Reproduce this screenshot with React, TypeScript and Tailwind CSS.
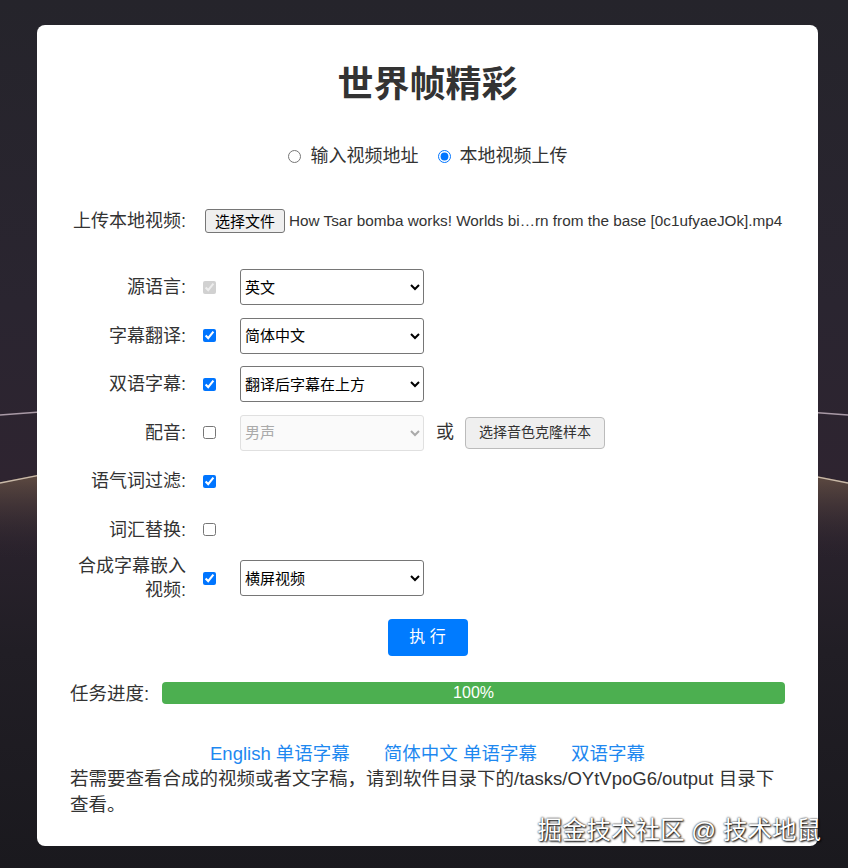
import React from "react";

const font = "font-['Liberation_Sans','Noto_Sans_CJK_SC',sans-serif]";

function Label({ children }: { children: React.ReactNode }) {
  return (
    <div className="w-[116px] shrink-0 text-right text-[18px] leading-[24px] text-[#333]">
      {children}
    </div>
  );
}

function Check({ checked, disabled }: { checked?: boolean; disabled?: boolean }) {
  return (
    <div className="w-[54px] shrink-0 flex items-center pl-[17px]">
      <input
        type="checkbox"
        defaultChecked={checked}
        disabled={disabled}
        className="w-[13px] h-[13px] m-0"
      />
    </div>
  );
}

function Select({ value, disabled }: { value: string; disabled?: boolean }) {
  return (
    <select
      defaultValue={value}
      disabled={disabled}
      className={
        disabled
          ? "w-[184px] h-[36px] shrink-0 border border-[#e0e0e0] rounded-[3px] bg-[#fafafa] text-[15px] text-[#aaa] pl-0"
          : "w-[184px] h-[36px] shrink-0 border border-[#767676] rounded-[3px] bg-white text-[15px] text-black pl-0"
      }
    >
      <option>{value}</option>
    </select>
  );
}

export default function App() {
  return (
    <div className={`relative min-h-screen w-full bg-[#222128] pt-[25px] pl-[37px] pb-[22px] ${font}`}>
      {/* backdrop */}
      <svg className="absolute inset-0 w-full h-full" viewBox="0 0 848 868" preserveAspectRatio="none">
        <defs>
          <linearGradient id="bg" x1="0" y1="0" x2="0" y2="1">
            <stop offset="0" stopColor="#25242b" />
            <stop offset="0.35" stopColor="#2a2530" />
            <stop offset="0.55" stopColor="#2e2430" />
            <stop offset="0.75" stopColor="#211e25" />
            <stop offset="1" stopColor="#1a191e" />
          </linearGradient>
          <linearGradient id="glow" x1="0" y1="0" x2="0" y2="1">
            <stop offset="0" stopColor="#6b5546" stopOpacity="0.8" />
            <stop offset="1" stopColor="#2e2430" stopOpacity="0" />
          </linearGradient>
        </defs>
        <rect width="848" height="868" fill="url(#bg)" />
        <path d="M0 482 L40 474 L40 560 L0 560 Z" fill="url(#glow)" />
        <path d="M808 474 L848 482 L848 560 L808 560 Z" fill="url(#glow)" />
        <path d="M0 415 L40 412" stroke="#a99aa6" strokeWidth="1.5" />
        <path d="M0 483 L40 475" stroke="#c9b9a8" strokeWidth="1.5" />
        <path d="M808 412 L848 415" stroke="#a99aa6" strokeWidth="1.5" />
        <path d="M808 475 L848 483" stroke="#c9b9a8" strokeWidth="1.5" />
      </svg>

      <div className="relative w-[781px] bg-white rounded-[8px] px-[33px] pt-[38px] pb-[28px] text-[#333]">
        <h1 className="text-center text-[36px] leading-[44px] font-bold text-[#333]">世界帧精彩</h1>

        <div className="mt-[37px] flex justify-center items-center h-[24px] text-[18px] text-[#333]">
          <label className="flex items-center">
            <input type="radio" name="src" className="m-0 mr-[10px] w-[13px] h-[13px]" />
            输入视频地址
          </label>
          <label className="flex items-center ml-[19px]">
            <input type="radio" name="src" defaultChecked className="m-0 mr-[9px] w-[13px] h-[13px]" />
            本地视频上传
          </label>
        </div>

        <div className="mt-[41px] flex items-center h-[24px]">
          <Label>上传本地视频:</Label>
          <button className="ml-[19px] w-[80px] shrink-0 whitespace-nowrap h-[24px] border border-[#767676] rounded-[3px] bg-[#efefef] text-[15px] text-black leading-none">
            选择文件
          </button>
          <span className="ml-[4px] text-[15.3px] text-[#333] whitespace-nowrap">
            How Tsar bomba works! Worlds bi…rn from the base [0c1ufyaeJOk].mp4
          </span>
        </div>

        <div className="mt-[30px] flex flex-col">
          <div className="h-[48.5px] flex items-center">
            <Label>源语言:</Label>
            <Check checked disabled />
            <Select value="英文" />
          </div>
          <div className="h-[48.5px] flex items-center">
            <Label>字幕翻译:</Label>
            <Check checked />
            <Select value="简体中文" />
          </div>
          <div className="h-[48.5px] flex items-center">
            <Label>双语字幕:</Label>
            <Check checked />
            <Select value="翻译后字幕在上方" />
          </div>
          <div className="h-[48.5px] flex items-center">
            <Label>配音:</Label>
            <Check />
            <Select value="男声" disabled />
            <span className="ml-[12px] text-[18px] text-[#333]">或</span>
            <button className="ml-[11px] w-[140px] h-[32px] border border-[#bbb] rounded-[4px] bg-[#efefef] text-[14px] text-[#333]">
              选择音色克隆样本
            </button>
          </div>
          <div className="h-[48.5px] flex items-center">
            <Label>语气词过滤:</Label>
            <Check checked />
          </div>
          <div className="h-[48.5px] flex items-center">
            <Label>词汇替换:</Label>
            <Check />
          </div>
          <div className="h-[48.5px] flex items-center">
            <Label>合成字幕嵌入视频:</Label>
            <Check checked />
            <Select value="横屏视频" />
          </div>
        </div>

        <div className="mt-[16px] flex justify-center">
          <button className="w-[80px] h-[37px] bg-[#007bff] rounded-[4px] text-white text-[16px]">执 行</button>
        </div>

        <div className="mt-[24px] flex items-center">
          <span className="text-[18.5px] text-[#333] whitespace-nowrap">任务进度:</span>
          <div className="ml-[13px] flex-1 h-[22px] bg-[#4caf50] rounded-[4px] flex items-center justify-center text-white text-[16px]">
            100%
          </div>
        </div>

        <div className="mt-[35px] flex justify-center gap-[34px] text-[18.5px] leading-[24px] text-[#1e88f0]">
          <a>English 单语字幕</a>
          <a>简体中文 单语字幕</a>
          <a>双语字幕</a>
        </div>
        <p className="text-[18.5px] leading-[26px] text-[#333]">
          若需要查看合成的视频或者文字稿，请到软件目录下的/tasks/OYtVpoG6/output 目录下查看。
        </p>
      </div>

      <div className="absolute right-[27px] bottom-[25px] text-[24.5px] leading-none text-white [text-shadow:0_0_2px_#000,1px_1px_2px_#000]">
        掘金技术社区 @ 技术地鼠
      </div>
    </div>
  );
}
